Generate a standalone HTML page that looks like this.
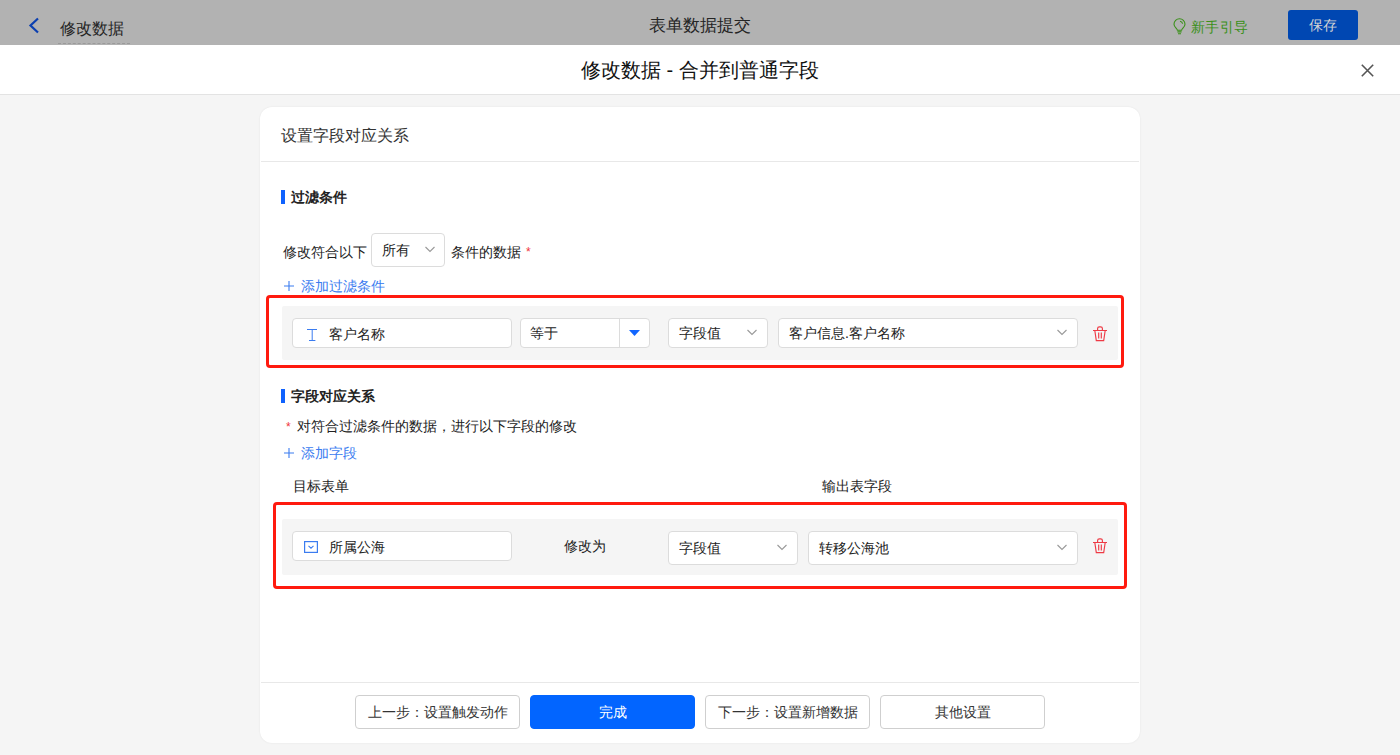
<!DOCTYPE html>
<html><head><meta charset="utf-8">
<style>
*{box-sizing:border-box;margin:0;padding:0}
html,body{width:1400px;height:755px;overflow:hidden;background:#f5f5f5;font-family:"Liberation Sans",sans-serif;color:#222;font-size:14px}
.a{position:absolute;white-space:nowrap}
#top{position:absolute;left:0;top:0;width:1400px;height:45px;background:#b2b2b2}
#mhead{position:absolute;left:0;top:45px;width:1400px;height:50px;background:#fff;border-bottom:1px solid #e3e3e3}
#card{position:absolute;left:260px;top:107px;width:880px;height:636px;background:#fff;border-radius:12px;box-shadow:0 0 2px rgba(0,0,0,0.08)}
.hr{position:absolute;height:1px;background:#e8e8e8}
.bar{position:absolute;width:4px;height:14px;background:#0f62fe}
.h3{font-weight:bold;color:#222;font-size:14px}
.blue{color:#3b7cf0}
.red{color:#f0343a}
.box{position:absolute;background:#fff;border:1px solid #dcdcdc;border-radius:4px}
.rbox{position:absolute;border:3px solid #ff1a0f;border-radius:4px}
.grow{position:absolute;background:#f5f5f5;border-radius:2px}
.btn{position:absolute;top:695px;height:34px;width:165px;border:1px solid #cfcfcf;border-radius:4px;background:#fff;text-align:center;line-height:32px;font-size:14px;color:#333}
</style></head><body>

<!-- top (overlayed) bar -->
<div id="top"></div>
<svg class="a" style="left:28px;top:17px" width="12" height="17" viewBox="0 0 12 17"><path d="M10 1.5 L2.5 8.5 L10 15.5" fill="none" stroke="#0b3fb0" stroke-width="2.2"/></svg>
<div class="a" style="left:60px;top:19px;font-size:16px;line-height:20px;color:#252525">修改数据</div>
<div class="a" style="left:58px;top:43px;width:72px;height:0;border-top:1px dashed #9a9a9a"></div>
<div class="a" style="left:649px;top:16px;font-size:17px;line-height:20px;color:#252525">表单数据提交</div>
<svg class="a" style="left:1173px;top:18px" width="13" height="17" viewBox="0 0 13 17"><path d="M4.4 12.3C4.4 10.6 1 9.2 1 6.2A5.5 5.5 0 0 1 12 6.2C12 9.2 8.6 10.6 8.6 12.3Z M4.4 13.9H8.6 M5 15.7H8 M7 3.2A3 3 0 0 1 9.6 5.8" fill="none" stroke="#3a9018" stroke-width="1.1"/></svg>
<div class="a" style="left:1191px;top:18px;font-size:14px;line-height:18px;color:#3a9018;letter-spacing:0.4px">新手引导</div>
<div class="a" style="left:1288px;top:10px;width:70px;height:30px;background:#0047b2;border-radius:3px;color:#d4d4d4;text-align:center;line-height:30px;font-size:14px">保存</div>

<!-- modal header -->
<div id="mhead"></div>
<div class="a" style="left:581px;top:58px;font-size:20px;line-height:24px;color:#111">修改数据 - 合并到普通字段</div>
<svg class="a" style="left:1361px;top:64px" width="13" height="13" viewBox="0 0 13 13"><path d="M0.8 0.8L12.2 12.2M12.2 0.8L0.8 12.2" stroke="#555" stroke-width="1.6"/></svg>

<!-- card -->
<div id="card"></div>
<div class="a" style="left:281px;top:126px;font-size:16px;line-height:20px;color:#333">设置字段对应关系</div>
<div class="hr" style="left:261px;top:161px;width:878px"></div>

<div class="bar" style="left:281px;top:190px"></div>
<div class="a h3" style="left:291px;top:188px;line-height:18px">过滤条件</div>

<div class="a" style="left:283px;top:243px;line-height:18px">修改符合以下</div>
<div class="box" style="left:371px;top:233px;width:74px;height:34px"></div>
<div class="a" style="left:382px;top:241px;line-height:18px">所有</div>
<svg class="a" style="left:425px;top:246px" width="10" height="7" viewBox="0 0 10 7"><path d="M0.5 1L5 5.5L9.5 1" fill="none" stroke="#999" stroke-width="1.1"/></svg>
<div class="a" style="left:451px;top:243px;line-height:18px">条件的数据</div>
<div class="a red" style="left:526px;top:243px;line-height:18px;font-size:12px">*</div>

<svg class="a" style="left:284px;top:281px" width="10" height="10" viewBox="0 0 10 10"><path d="M0 5H10M5 0V10" stroke="#3b7cf0" stroke-width="1.1"/></svg>
<div class="a blue" style="left:301px;top:277px;line-height:18px">添加过滤条件</div>

<div class="rbox" style="left:266px;top:295px;width:858px;height:73px"></div>
<div class="grow" style="left:282px;top:306px;width:836px;height:54px"></div>
<div class="box" style="left:292px;top:318px;width:220px;height:30px"></div>
<svg class="a" style="left:307px;top:329px" width="10" height="12" viewBox="0 0 10 12"><path d="M0 0.5H10M5.2 0.5V11.5M2 11.5H8.4" fill="none" stroke="#3b7cf0" stroke-width="1"/></svg>
<div class="a" style="left:329px;top:325px;line-height:18px">客户名称</div>
<div class="box" style="left:520px;top:318px;width:130px;height:30px"></div>
<div class="a" style="left:619px;top:319px;width:1px;height:28px;background:#dcdcdc"></div>
<svg class="a" style="left:629px;top:330px" width="11" height="6" viewBox="0 0 11 6"><path d="M0 0H11L5.5 6Z" fill="#1266ff"/></svg>
<div class="a" style="left:530px;top:324px;line-height:18px">等于</div>
<div class="box" style="left:668px;top:318px;width:100px;height:30px"></div>
<div class="a" style="left:679px;top:324px;line-height:18px">字段值</div>
<svg class="a" style="left:747px;top:329px" width="10" height="7" viewBox="0 0 10 7"><path d="M0.5 1L5 5.5L9.5 1" fill="none" stroke="#999" stroke-width="1.1"/></svg>
<div class="box" style="left:778px;top:318px;width:300px;height:30px"></div>
<div class="a" style="left:789px;top:324px;line-height:18px">客户信息.客户名称</div>
<svg class="a" style="left:1057px;top:329px" width="10" height="7" viewBox="0 0 10 7"><path d="M0.5 1L5 5.5L9.5 1" fill="none" stroke="#999" stroke-width="1.1"/></svg>
<svg class="a" style="left:1092px;top:325px" width="16" height="17" viewBox="0 0 16 17"><path d="M1 5.5H15M5.6 5.5V3.6A1.8 1.8 0 0 1 7.4 1.8H8.6A1.8 1.8 0 0 1 10.4 3.6V5.5M2.8 5.5L4.3 15.6H11.7L13.2 5.5M6.7 7.6V13.6M9.3 7.6V13.6" fill="none" stroke="#ee3a45" stroke-width="1.15"/></svg>

<div class="bar" style="left:281px;top:389px"></div>
<div class="a h3" style="left:291px;top:387px;line-height:18px">字段对应关系</div>
<div class="a red" style="left:286px;top:418px;line-height:18px;font-size:12px">*</div>
<div class="a" style="left:297px;top:417px;line-height:18px">对符合过滤条件的数据，进行以下字段的修改</div>
<svg class="a" style="left:284px;top:448px" width="10" height="10" viewBox="0 0 10 10"><path d="M0 5H10M5 0V10" stroke="#3b7cf0" stroke-width="1.1"/></svg>
<div class="a blue" style="left:301px;top:444px;line-height:18px">添加字段</div>
<div class="a" style="left:293px;top:477px;line-height:18px">目标表单</div>
<div class="a" style="left:822px;top:477px;line-height:18px">输出表字段</div>

<div class="rbox" style="left:273px;top:502px;width:854px;height:87px"></div>
<div class="grow" style="left:282px;top:519px;width:836px;height:56px"></div>
<div class="box" style="left:292px;top:531px;width:220px;height:30px"></div>
<svg class="a" style="left:304px;top:541px" width="14" height="12" viewBox="0 0 14 12"><rect x="0.6" y="0.6" width="12.8" height="10.8" fill="none" stroke="#3b7cf0" stroke-width="1.2"/><path d="M4.5 4.8L7 7.2L9.5 4.8" fill="none" stroke="#3b7cf0" stroke-width="1.1"/></svg>
<div class="a" style="left:329px;top:538px;line-height:18px">所属公海</div>
<div class="a" style="left:564px;top:537px;line-height:18px">修改为</div>
<div class="box" style="left:668px;top:531px;width:130px;height:34px"></div>
<div class="a" style="left:679px;top:539px;line-height:18px">字段值</div>
<svg class="a" style="left:777px;top:544px" width="10" height="7" viewBox="0 0 10 7"><path d="M0.5 1L5 5.5L9.5 1" fill="none" stroke="#999" stroke-width="1.1"/></svg>
<div class="box" style="left:808px;top:531px;width:270px;height:34px"></div>
<div class="a" style="left:819px;top:539px;line-height:18px">转移公海池</div>
<svg class="a" style="left:1057px;top:544px" width="10" height="7" viewBox="0 0 10 7"><path d="M0.5 1L5 5.5L9.5 1" fill="none" stroke="#999" stroke-width="1.1"/></svg>
<svg class="a" style="left:1092px;top:537px" width="16" height="17" viewBox="0 0 16 17"><path d="M1 5.5H15M5.6 5.5V3.6A1.8 1.8 0 0 1 7.4 1.8H8.6A1.8 1.8 0 0 1 10.4 3.6V5.5M2.8 5.5L4.3 15.6H11.7L13.2 5.5M6.7 7.6V13.6M9.3 7.6V13.6" fill="none" stroke="#ee3a45" stroke-width="1.15"/></svg>

<!-- footer -->
<div class="hr" style="left:261px;top:682px;width:878px"></div>
<div class="btn" style="left:355px">上一步：设置触发动作</div>
<div class="btn" style="left:530px;background:#0265ff;border-color:#0265ff;color:#fff">完成</div>
<div class="btn" style="left:705px">下一步：设置新增数据</div>
<div class="btn" style="left:880px">其他设置</div>

</body></html>
